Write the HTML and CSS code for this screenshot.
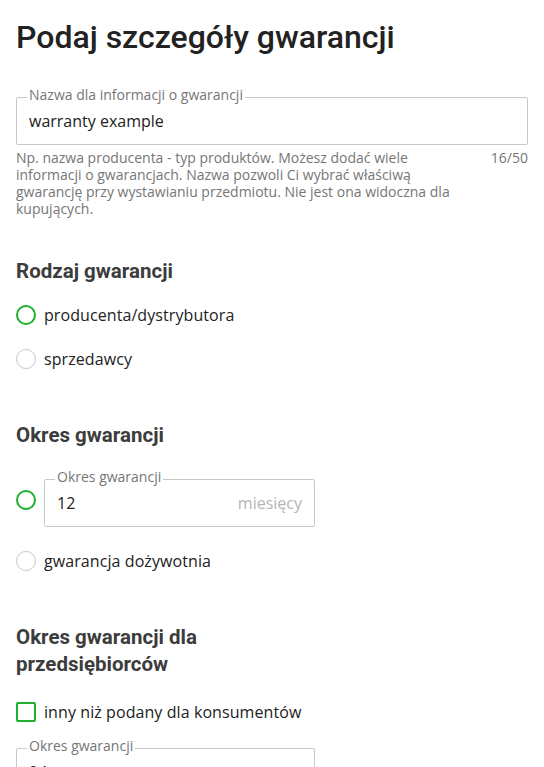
FILE: index.html
```html
<!DOCTYPE html>
<html lang="pl">
<head>
<meta charset="utf-8">
<link rel="stylesheet" href="styles.css">
</head>
<body>
<div class="page">
  <h1 class="title">Podaj szczegóły gwarancji</h1>

  <div class="field">
    <div class="box">
      <span class="legend">Nazwa dla informacji o gwarancji</span>
      <span class="value">warranty example</span>
    </div>
    <div class="helper">
      <p class="help-text">Np. nazwa producenta - typ produktów. Możesz dodać wiele informacji o gwarancjach. Nazwa pozwoli Ci wybrać właściwą gwarancję przy wystawianiu przedmiotu. Nie jest ona widoczna dla kupujących.</p>
      <span class="counter">16/50</span>
    </div>
  </div>

  <section class="section">
    <h2 class="heading">Rodzaj gwarancji</h2>
    <div class="options">
      <div class="option"><span class="radio radio-active"></span><span class="label">producenta/dystrybutora</span></div>
      <div class="option"><span class="radio"></span><span class="label">sprzedawcy</span></div>
    </div>
  </section>

  <section class="section">
    <h2 class="heading">Okres gwarancji</h2>
    <div class="option-input">
      <span class="radio radio-active radio-top"></span>
      <div class="box box-small">
        <span class="legend">Okres gwarancji</span>
        <span class="value">12</span>
        <span class="suffix">miesięcy</span>
      </div>
    </div>
    <div class="option option-after"><span class="radio"></span><span class="label">gwarancja dożywotnia</span></div>
  </section>

  <section class="section">
    <h2 class="heading heading-narrow">Okres gwarancji dla przedsiębiorców</h2>
    <div class="option option-check"><span class="checkbox"></span><span class="label">inny niż podany dla konsumentów</span></div>
    <div class="box box-last">
      <span class="legend">Okres gwarancji</span>
      <span class="value">24</span>
    </div>
  </section>
</div>
</body>
</html>
```

FILE: styles.css
```css
* { box-sizing: border-box; }
html, body { margin: 0; padding: 0; background: #fff; }
body { font-family: "Open Sans", sans-serif; color: #222; overflow: hidden; height: 767px; }
.page { padding: 17px 16px 0 16px; }

.title {
  font-family: Roboto, sans-serif;
  font-weight: 500;
  font-size: 32px;
  line-height: 40px;
  margin: 0;
  color: #222;
}

.field { margin-top: 40px; }

.box {
  border: 1px solid #c8c8c8;
  border-radius: 2px;
  padding: 0 12px;
  height: 48px;
  display: flex;
  align-items: center;
  position: relative;
}
.legend {
  position: absolute;
  top: -10px;
  left: 10px;
  font-size: 14px;
  line-height: 14px;
  color: #767676;
  background: #fff;
  padding: 0 2px;
  white-space: nowrap;
}
.value {
  font-size: 16px;
  line-height: 20px;
  color: #222;
}
.suffix {
  margin-left: auto;
  font-size: 16px;
  line-height: 20px;
  color: #b5b5b5;
}

.helper {
  display: flex;
  justify-content: space-between;
  gap: 20px;
  margin-top: 4px;
}
.help-text {
  margin: 0;
  font-size: 14px;
  line-height: 17px;
  color: #767676;
  max-width: 460px;
}
.counter {
  font-size: 14px;
  line-height: 17px;
  color: #767676;
  flex-shrink: 0;
}

.section { margin-top: 41px; }
.heading {
  font-family: Roboto, sans-serif;
  font-weight: 700;
  font-size: 20.5px;
  line-height: 27px;
  margin: 0;
  color: #3c3c3c;
}
.heading-narrow { max-width: 230px; }

.options { margin-top: 8px; display: flex; flex-direction: column; }

.option { display: flex; align-items: center; gap: 8px; height: 44px; }

.option-input {
  display: flex;
  align-items: flex-start;
  gap: 8px;
  margin-top: 30px;
}
.radio-top { margin-top: 11px; }
.option-after { margin-top: 12px; }

.radio {
  width: 20px;
  height: 20px;
  border-radius: 50%;
  border: 1px solid #c8c8c8;
  flex-shrink: 0;
}
.radio-active { border: 2px solid #1fb02d; }

.checkbox {
  width: 20px;
  height: 20px;
  border: 2px solid #1fb02d;
  border-radius: 2px;
  flex-shrink: 0;
}

.label { font-size: 16px; line-height: 22px; color: #222; letter-spacing: 0.08px; }

.box-small { width: 271px; flex-shrink: 0; }

.option-check { margin-top: 12px; }
.box-last { margin-top: 14px; width: 299px; }
```
